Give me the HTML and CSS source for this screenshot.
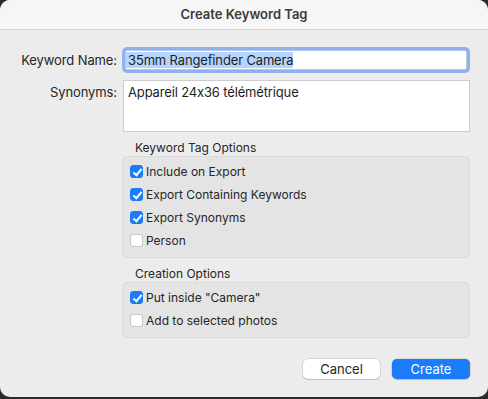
FILE: index.html
```html
<!DOCTYPE html>
<html lang="en">
<head>
    <meta charset="UTF-8">
    <title>Create Keyword Tag</title>
    <link rel="stylesheet" href="styles.css">
</head>
<body>
    <div class="window">
        <div class="titlebar">Create Keyword Tag</div>

        <form class="sheet">
            <label class="field-label" for="keyword-name">Keyword Name:</label>
            <div class="name-field" id="keyword-name"><span class="selection">35mm Rangefinder Camera</span></div>

            <label class="field-label" for="synonyms">Synonyms:</label>
            <div class="synonyms-field" id="synonyms">Appareil 24x36 télémétrique</div>

            <div class="group">
                <div class="group-title">Keyword Tag Options</div>
                <div class="group-box">
                    <div class="check-row"><span class="check on"></span>Include on Export</div>
                    <div class="check-row"><span class="check on"></span>Export Containing Keywords</div>
                    <div class="check-row"><span class="check on"></span>Export Synonyms</div>
                    <div class="check-row"><span class="check"></span>Person</div>
                </div>
            </div>

            <div class="group">
                <div class="group-title">Creation Options</div>
                <div class="group-box">
                    <div class="check-row"><span class="check on"></span>Put inside "Camera"</div>
                    <div class="check-row"><span class="check"></span>Add to selected photos</div>
                </div>
            </div>

            <div class="actions">
                <button type="button" class="btn">Cancel</button>
                <button type="button" class="btn primary">Create</button>
            </div>
        </form>
    </div>
</body>
</html>
```

FILE: styles.css
```css
:root {
    --text-color: #262626;
    --accent: #1b7cf9;
    --sheet-bg: #ececec;
    --group-bg: #e4e4e4;
}

* {
    box-sizing: border-box;
    margin: 0;
    padding: 0;
}

body {
    background: #2a2a2a;
    font-family: Inter, 'Noto Sans', sans-serif;
    font-feature-settings: "calt" 0;
    font-size: 13px;
    color: var(--text-color);
    height: 399px;
    overflow: hidden;
}

.window {
    height: 397px;
    background: var(--sheet-bg);
    border-radius: 10px;
    overflow: hidden;
}

.titlebar {
    height: 30px;
    background: #f6f6f6;
    border-bottom: 1px solid #d6d6d6;
    text-align: center;
    font-weight: 600;
    font-size: 13px;
    line-height: 29px;
    color: #3a3a3a;
}

.sheet {
    display: grid;
    grid-template-columns: 117px 1fr;
    column-gap: 5px;
    padding: 20px 18px 0 0;
}

.field-label {
    text-align: right;
    line-height: 20px;
    letter-spacing: -0.1px;
}

.name-field {
    margin: 0 3px;
    height: 20px;
    background: white;
    border: 1px solid #b9c8e6;
    box-shadow: 0 0 0 3px #8fb2ee;
    border-radius: 2px;
    padding: 1px 0 0 0;
    line-height: 17px;
    letter-spacing: -0.15px;
    color: #1e1e1e;
}

.selection {
    background: #b5d5fd;
    padding: 0 0 0 2px;
}

.sheet > .field-label:nth-of-type(2) {
    margin-top: 10px;
    line-height: 24px;
}

.synonyms-field {
    margin: 10px 0 0 1px;
    height: 52px;
    background: white;
    border: 1px solid #cdcdcd;
    padding: 3px 4px;
    line-height: 17px;
    letter-spacing: -0.15px;
    color: #1e1e1e;
}

.group {
    grid-column: 2;
    margin-top: 8px;
}

.group-title {
    padding-left: 13px;
    line-height: 16px;
    font-size: 12px;
}

.group-box {
    background: var(--group-bg);
    border: 1px solid #dadada;
    border-radius: 5px;
    padding: 3px 0 5px 7px;
}

.check-row {
    height: 23px;
    display: flex;
    align-items: center;
    gap: 3px;
    font-size: 12px;
}

.check {
    width: 13px;
    height: 13px;
    border-radius: 3px;
    background: white;
    border: 1px solid #c4c4c4;
    flex-shrink: 0;
    position: relative;
}

.check.on {
    background: var(--accent);
    border-color: var(--accent);
}

.check.on::after {
    content: '';
    position: absolute;
    left: 3.5px;
    top: 0.5px;
    width: 3px;
    height: 7px;
    border: solid white;
    border-width: 0 2px 2px 0;
    transform: rotate(40deg);
}

.actions {
    grid-column: 1 / 3;
    display: flex;
    justify-content: flex-end;
    gap: 12px;
    margin-top: 21px;
}

.btn {
    width: 77px;
    height: 20px;
    border-radius: 5px;
    border: none;
    background: white;
    box-shadow: 0 0 0 0.5px rgba(0, 0, 0, 0.18), 0 1px 1px rgba(0, 0, 0, 0.12);
    font-family: inherit;
    font-size: 13px;
    color: #262626;
}

.btn.primary {
    width: 78px;
    background: var(--accent);
    color: white;
}
```
